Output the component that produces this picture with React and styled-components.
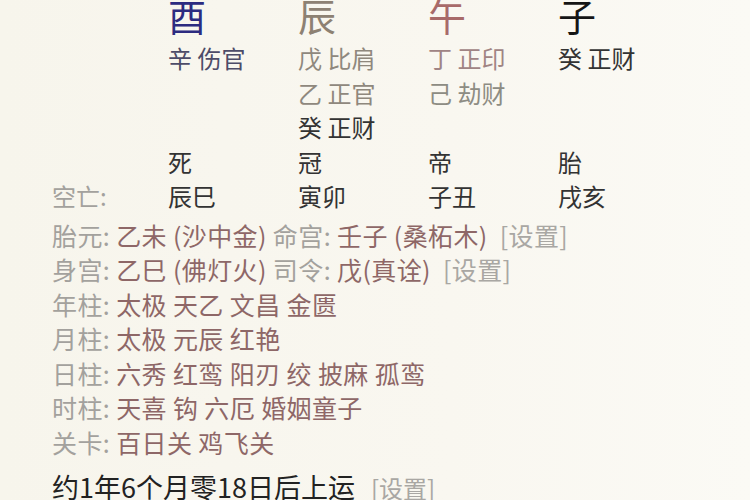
import React from 'react'
import styled, { createGlobalStyle } from 'styled-components'

const GlobalStyle = createGlobalStyle`
  html, body {
    margin: 0;
    padding: 0;
    background: #f8f6ef;
  }
  body {
    width: 750px;
    height: 500px;
    overflow: hidden;
    font-family: "Noto Sans CJK SC", "Noto Sans", sans-serif;
  }
`

const Page = styled.div`
  width: 750px;
  height: 500px;
  padding-left: 52px;
  box-sizing: border-box;
  background: linear-gradient(90deg, #f7f5ec 0%, #f9f7f0 60%, #fbfaf5 100%);
`

const Chart = styled.div`
  display: grid;
  grid-template-columns: 116px repeat(4, 130px);
  font-size: 24px;
  line-height: 34.5px;
`

const Branch = styled.div`
  font-size: 38px;
  line-height: 30px;
  height: 41px;
  color: ${(p) => p.color};
`

const Cell = styled.div`
  color: ${(p) => p.color || '#333'};
  white-space: nowrap;
`

const Label = styled.div`
  color: #a3a19d;
  white-space: nowrap;
`

const Lines = styled.div`
  margin-top: 4px;
  font-size: 25px;
  letter-spacing: 0.4px;
  line-height: 34.5px;
`

const Line = styled.div`
  white-space: nowrap;
`

const Key = styled.span`
  color: #a3a19d;
`

const Value = styled.span`
  color: #8e6767;
`

const Setting = styled.span`
  color: #a9a7a3;
  margin-left: ${(p) => p.gap || 12}px;
`

const Footer = styled.div`
  margin-top: 11px;
  font-size: 27px;
  line-height: 34px;
  color: #222;
  white-space: nowrap;

  ${Setting} {
    font-size: 24px;
  }
`

const branches = [
  { ch: '酉', color: '#2c2b80' },
  { ch: '辰', color: '#8d8173' },
  { ch: '午', color: '#a86a69' },
  { ch: '子', color: '#151515' },
]

const stems = [
  [
    { t: '辛 伤官', c: '#4d4c68' },
    { t: '戊 比肩', c: '#8f887d' },
    { t: '丁 正印', c: '#a08484' },
    { t: '癸 正财', c: '#333' },
  ],
  [null, { t: '乙 正官', c: '#8f887d' }, { t: '己 劫财', c: '#8d8c83' }, null],
  [null, { t: '癸 正财', c: '#333' }, null, null],
]

const stages = ['死', '冠', '帝', '胎']
const voids = ['辰巳', '寅卯', '子丑', '戌亥']

const stars = [
  ['年柱', '太极 天乙 文昌 金匮'],
  ['月柱', '太极 元辰 红艳'],
  ['日柱', '六秀 红鸾 阳刃 绞 披麻 孤鸾'],
  ['时柱', '天喜 钩 六厄 婚姻童子'],
  ['关卡', '百日关 鸡飞关'],
]

export default function App() {
  return (
    <>
      <GlobalStyle />
      <Page>
        <Chart>
          <div />
          {branches.map((b) => (
            <Branch key={b.ch} color={b.color}>
              {b.ch}
            </Branch>
          ))}
          {stems.map((row, i) => (
            <React.Fragment key={i}>
              <div />
              {row.map((s, j) => (
                <Cell key={j} color={s && s.c}>
                  {s ? s.t : '\u00a0'}
                </Cell>
              ))}
            </React.Fragment>
          ))}
          <div />
          {stages.map((s) => (
            <Cell key={s}>{s}</Cell>
          ))}
          <Label>空亡:</Label>
          {voids.map((v) => (
            <Cell key={v}>{v}</Cell>
          ))}
        </Chart>
        <Lines>
          <Line>
            <Key>胎元: </Key>
            <Value>乙未 (沙中金) </Value>
            <Key>命宫: </Key>
            <Value>壬子 (桑柘木)</Value>
            <Setting>[设置]</Setting>
          </Line>
          <Line>
            <Key>身宫: </Key>
            <Value>乙巳 (佛灯火) </Value>
            <Key>司令: </Key>
            <Value>戊(真诠)</Value>
            <Setting>[设置]</Setting>
          </Line>
          {stars.map(([k, v]) => (
            <Line key={k}>
              <Key>{k}: </Key>
              <Value>{v}</Value>
            </Line>
          ))}
        </Lines>
        <Footer>
          约1年6个月零18日后上运
          <Setting gap={16}>[设置]</Setting>
        </Footer>
      </Page>
    </>
  )
}
